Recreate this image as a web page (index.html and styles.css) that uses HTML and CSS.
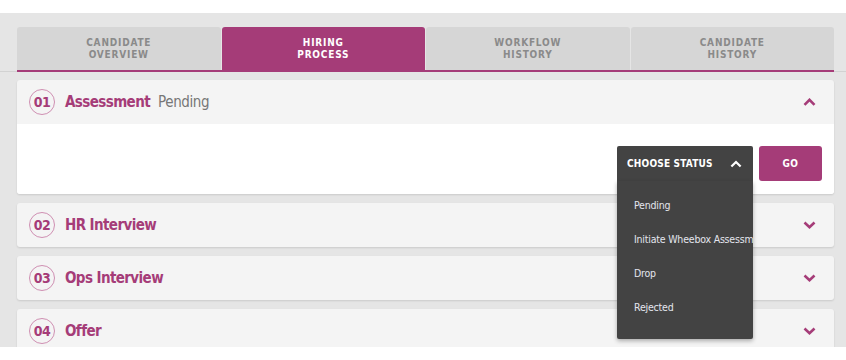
FILE: index.html
```html
<!DOCTYPE html>
<html lang="en">
<head>
    <meta charset="UTF-8">
    <meta name="viewport" content="width=device-width, initial-scale=1.0">
    <title>Hiring Process</title>
    <link rel="stylesheet" href="styles.css">
</head>
<body>
    <div class="page">
        <!-- tabs -->
        <div class="tabbar">
            <nav class="tabs">
                <div class="tab">Candidate<br>Overview</div>
                <div class="tab active">Hiring<br>Process</div>
                <div class="tab">Workflow<br>History</div>
                <div class="tab">Candidate<br>History</div>
            </nav>
        </div>

        <div class="stages">
            <section class="stage open">
                <div class="stage-head">
                    <span class="num">01</span>
                    <span class="title">Assessment</span>
                    <span class="state">Pending</span>
                    <svg class="chev" viewBox="0 0 13 8"><polyline points="1.5,6.8 6.5,1.8 11.5,6.8"/></svg>
                </div>
                <div class="stage-body">
                    <div class="select">
                        <div class="select-head">
                            <span>Choose Status</span>
                            <svg class="chev light" viewBox="0 0 13 8"><polyline points="1.5,6.8 6.5,1.8 11.5,6.8"/></svg>
                        </div>
                        <ul class="select-list">
                            <li>Pending</li>
                            <li>Initiate Wheebox Assessment</li>
                            <li>Drop</li>
                            <li>Rejected</li>
                        </ul>
                    </div>
                    <button class="go-btn">GO</button>
                </div>
            </section>

            <section class="stage">
                <div class="stage-head">
                    <span class="num">02</span>
                    <span class="title">HR Interview</span>
                    <svg class="chev" viewBox="0 0 13 8"><polyline points="1.5,1.5 6.5,6.2 11.5,1.5"/></svg>
                </div>
            </section>

            <section class="stage">
                <div class="stage-head">
                    <span class="num">03</span>
                    <span class="title">Ops Interview</span>
                    <svg class="chev" viewBox="0 0 13 8"><polyline points="1.5,1.5 6.5,6.2 11.5,1.5"/></svg>
                </div>
            </section>

            <section class="stage">
                <div class="stage-head">
                    <span class="num">04</span>
                    <span class="title">Offer</span>
                    <svg class="chev" viewBox="0 0 13 8"><polyline points="1.5,1.5 6.5,6.2 11.5,1.5"/></svg>
                </div>
            </section>
        </div>
    </div>
</body>
</html>
```

FILE: styles.css
```css
:root {
    --primary: #a53c78;
    --ring: #cf8fb2;
    --page: #e5e5e5;
    --tab: #d6d6d6;
    --head: #f4f4f4;
    --dark: #434343;
}

* {
    box-sizing: border-box;
}

body {
    margin: 0;
    background: #fff;
    font-family: 'DejaVu Sans Condensed', 'Roboto', sans-serif;
}

.page {
    margin-top: 13px;
    height: 334px;
    background: var(--page);
    padding-top: 14px;
    overflow: hidden;
}

/* tabs */
.tabbar {
    border-bottom: 1px solid #d2d2d2;
    padding: 0 12px 0 17px;
}

.tabs {
    display: flex;
    gap: 1px;
    border-bottom: 2px solid var(--primary);
    margin-bottom: -1px;
}

.tab {
    flex: 1;
    height: 43px;
    display: flex;
    align-items: center;
    justify-content: center;
    text-align: center;
    background: var(--tab);
    color: #8a8a8a;
    border-radius: 3px 3px 0 0;
    text-transform: uppercase;
    font-size: 10px;
    font-weight: bold;
    letter-spacing: 0.8px;
    line-height: 12px;
}

.tab.active {
    background: var(--primary);
    color: #fff;
}

/* stages */
.stages {
    display: flex;
    flex-direction: column;
    gap: 9px;
    padding: 8px 12px 0 17px;
}

.stage {
    background: var(--head);
    border-radius: 3px;
    box-shadow: 0 1px 2px rgba(0,0,0,0.12);
}

.stage-head {
    height: 44px;
    display: flex;
    align-items: center;
    padding: 0 18px 0 12px;
}

.num {
    width: 26px;
    height: 26px;
    border: 1.5px solid var(--ring);
    border-radius: 50%;
    display: flex;
    align-items: center;
    justify-content: center;
    color: var(--primary);
    font-size: 14px;
    font-weight: bold;
    letter-spacing: -0.6px;
    margin-right: 10px;
}

.title {
    color: var(--primary);
    font-size: 15px;
    font-weight: bold;
    letter-spacing: -0.6px;
}

.state {
    color: #777;
    font-size: 15px;
    letter-spacing: -0.4px;
    margin-left: 8px;
}

.chev {
    width: 13px;
    height: 8px;
    margin-left: auto;
    fill: none;
    stroke: var(--primary);
    stroke-width: 2.6;
}

.chev.light {
    width: 12px;
    stroke: #fff;
    stroke-width: 2.4;
}

.stage-body {
    background: #fff;
    border-radius: 0 0 3px 3px;
    height: 70px;
    display: flex;
    justify-content: flex-end;
    align-items: flex-start;
    gap: 6px;
    padding: 22px 12px 0 0;
}

/* status dropdown */
.select {
    position: relative;
    width: 136px;
}

.select-head {
    height: 35px;
    display: flex;
    align-items: center;
    padding: 0 11px 0 10px;
    background: var(--dark);
    border-radius: 2px 2px 0 0;
    color: #fff;
    font-size: 10px;
    font-weight: bold;
    text-transform: uppercase;
    letter-spacing: 0.2px;
}

.select-list {
    position: absolute;
    top: 35px;
    left: 0;
    right: 0;
    margin: 0;
    padding: 7px 0 15px;
    list-style: none;
    background: var(--dark);
    border-radius: 0 0 2px 2px;
    box-shadow: 0 2px 4px rgba(0,0,0,0.3);
    z-index: 10;
}

.select-list li {
    height: 34px;
    line-height: 34px;
    padding-left: 17px;
    color: #e4e6ee;
    font-size: 10.5px;
    letter-spacing: -0.2px;
    white-space: nowrap;
    overflow: hidden;
}

.go-btn {
    width: 63px;
    height: 35px;
    border: none;
    border-radius: 3px;
    background: var(--primary);
    color: #fff;
    font-family: inherit;
    font-size: 10px;
    font-weight: bold;
    letter-spacing: 0.5px;
}
```
